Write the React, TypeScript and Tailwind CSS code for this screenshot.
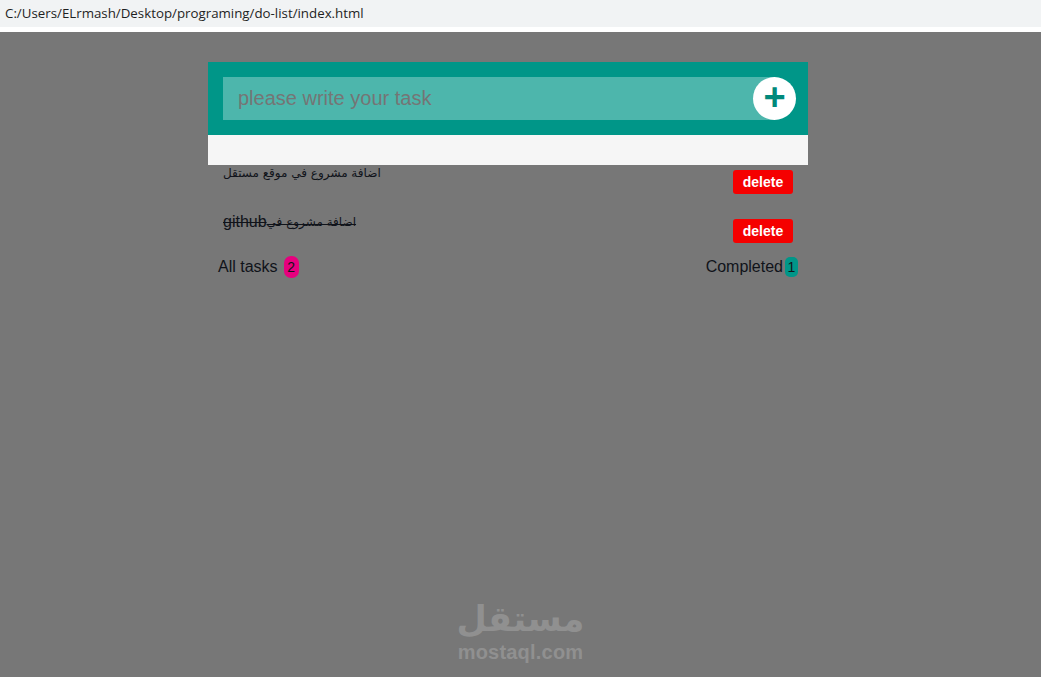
export default function App() {
  const row = "flex justify-between items-start px-[15px] h-[49px] text-[16px] leading-[15px] text-[#10131a]";
  const del = "mt-[5px] h-[24px] w-[60px] rounded-[3px] bg-[#f50000] text-[14px] font-bold text-white";
  return (
    <div className="relative h-[677px] w-full overflow-hidden bg-[#777777] font-['Liberation_Sans',sans-serif]">
      <div className="h-[27px] bg-[#f1f3f4] pl-[5px] font-['Open_Sans',sans-serif] text-[13.3px] leading-[27px] text-[#1f1f1f]">
        C:/Users/ELrmash/Desktop/programing/do-list/index.html
      </div>
      <div className="h-[5px] bg-white" />
      <main className="ml-[208px] mt-[30px] w-[600px]">
        <div className="h-[73px] bg-[#009688] p-[15px]">
          <div className="relative w-[573px]">
            <input
              readOnly
              placeholder="please write your task"
              className="h-[43px] w-[552px] bg-[#4db6ac] px-[15px] text-[20px] outline-none placeholder:text-[#757575]"
            />
            <button className="absolute right-0 top-0 flex h-[43px] w-[43px] items-center justify-center rounded-full bg-white pb-[3px] text-[38px] font-bold leading-none text-[#00897b]">
              +
            </button>
          </div>
        </div>
        <div className="h-[30px] bg-[#f6f6f6]" />
        <div className={row}>
          <span className="pt-[1px] font-['DejaVu_Sans',sans-serif] text-[12px]">اضافة مشروع في موقع مستقل</span>
          <button className={del}>delete</button>
        </div>
        <div className={row}>
          <span className="line-through">
            github<span className="relative -top-[1px] font-['DejaVu_Sans',sans-serif] text-[12px]">اضافة مشروع في</span>
          </span>
          <button className={del}>delete</button>
        </div>
        <div className="-mt-[8px] flex items-center justify-between px-[10px] text-[16px] text-[#10131a]">
          <div className="flex items-center">
            <span>All tasks</span>
            <span className="ml-[6px] flex h-[22px] w-[15px] items-center justify-center rounded-[7px] bg-[#e6007e] text-[14px]">2</span>
          </div>
          <div className="flex items-center">
            <span>Completed</span>
            <span className="ml-[2px] flex h-[20px] w-[13px] items-center justify-center rounded-[5px] bg-[#009688] text-[14px]">1</span>
          </div>
        </div>
      </main>
      <div className="absolute left-[458px] top-[598px] flex w-[125px] flex-col items-center text-[#909090]">
        <span className="font-['DejaVu_Sans',sans-serif] text-[35px] font-bold leading-[43px]">مستقل</span>
        <span className="whitespace-nowrap text-[20px] font-bold leading-[22px] tracking-[0.2px]">mostaql.com</span>
      </div>
    </div>
  );
}
